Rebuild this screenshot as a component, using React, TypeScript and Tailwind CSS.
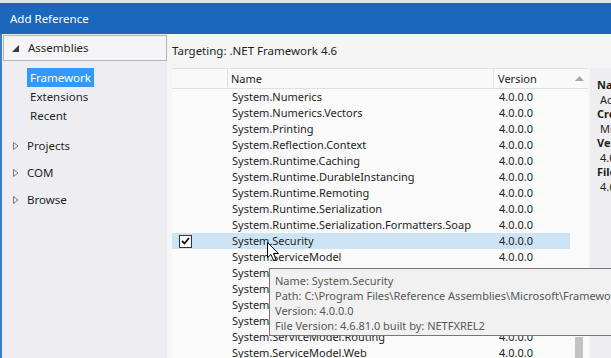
import React from 'react';

const rows: { name: string; version: string; checked?: boolean }[] = [
  { name: 'System.Numerics', version: '4.0.0.0' },
  { name: 'System.Numerics.Vectors', version: '4.0.0.0' },
  { name: 'System.Printing', version: '4.0.0.0' },
  { name: 'System.Reflection.Context', version: '4.0.0.0' },
  { name: 'System.Runtime.Caching', version: '4.0.0.0' },
  { name: 'System.Runtime.DurableInstancing', version: '4.0.0.0' },
  { name: 'System.Runtime.Remoting', version: '4.0.0.0' },
  { name: 'System.Runtime.Serialization', version: '4.0.0.0' },
  { name: 'System.Runtime.Serialization.Formatters.Soap', version: '4.0.0.0' },
  { name: 'System.Security', version: '4.0.0.0', checked: true },
  { name: 'System.ServiceModel', version: '4.0.0.0' },
  { name: 'System.ServiceModel.Activation', version: '4.0.0.0' },
  { name: 'System.ServiceModel.Activities', version: '4.0.0.0' },
  { name: 'System.ServiceModel.Channels', version: '4.0.0.0' },
  { name: 'System.ServiceModel.Discovery', version: '4.0.0.0' },
  { name: 'System.ServiceModel.Routing', version: '4.0.0.0' },
  { name: 'System.ServiceModel.Web', version: '4.0.0.0' },
];

function Collapsed() {
  return (
    <svg width="6" height="8" viewBox="0 0 6 8" className="shrink-0">
      <path d="M0.5 0.5 L5 4 L0.5 7.5 Z" fill="none" stroke="#7a7a7a" strokeWidth="1" />
    </svg>
  );
}

function Cursor() {
  return (
    <svg width="13" height="20" viewBox="0 0 13 20" className="absolute left-[267px] top-[242px]">
      <path d="M0.5 0.5 L0.5 15.5 L4 12.5 L6.5 18.5 L9 17.5 L6.5 11.5 L11.5 11.5 Z" fill="#fff" stroke="#000" strokeWidth="1" />
    </svg>
  );
}

export default function App() {
  return (
    <div className="relative w-[611px] h-[358px] overflow-hidden bg-[#f5f5f5] text-[11px] text-[#1e1e1e] font-['Noto_Sans',sans-serif] leading-[16px]">
      {/* Title bar */}
      <div className="h-[34px] bg-[#1b67bd] border-t-[3px] border-[#dde4ec] flex items-center pl-[10px] text-white text-[11.5px]">
        Add Reference
      </div>

      <div className="flex h-[324px]">
        {/* Left nav */}
        <div className="w-[167px] shrink-0 bg-[#eeeef2] border-l-2 border-[#3d7fc6] pt-[1px] text-[11.5px]">
          <div className="ml-[1px] h-[26px] bg-[#f5f5f7] border border-[#b4b4bc] flex items-center pl-[8px] gap-[9px]">
            <svg width="7" height="7" viewBox="0 0 7 7">
              <path d="M7 0 L7 7 L0 7 Z" fill="#3a3a3a" />
            </svg>
            <span>Assemblies</span>
          </div>
          <div className="pl-[25px] pt-[7px] flex flex-col items-start">
            <span className="bg-[#3399ff] text-white px-[3px] h-[19px] flex items-center">Framework</span>
            <span className="px-[3px] h-[19px] flex items-center">Extensions</span>
            <span className="px-[3px] h-[19px] flex items-center">Recent</span>
          </div>
          <div className="flex flex-col pl-[11px] pt-[7px]">
            {['Projects', 'COM', 'Browse'].map((t) => (
              <div key={t} className="h-[27px] flex items-center gap-[8px]">
                <Collapsed />
                <span>{t}</span>
              </div>
            ))}
          </div>
        </div>

        {/* Main */}
        <div className="flex-1 flex flex-col">
          <div className="h-[34px] flex items-center justify-between pl-[5px]">
            <span className="text-[11.5px]">Targeting: .NET Framework 4.6</span>
            <div className="w-[30px] h-[23px] bg-white border border-[#cfcfcf] border-r-0 flex items-center pl-[3px] text-[#7a7a7a] overflow-hidden mt-[1px]">
              Search
            </div>
          </div>

          <div className="flex flex-1 min-h-0">
            {/* List */}
            <div className="ml-[5px] w-[416px] bg-[#fafafa] flex flex-col">
              <div className="h-[21px] flex border-t border-b border-[#e0e0e0] bg-[#f9f9f9]">
                <div className="w-[56px] border-r border-[#e0e0e0]" />
                <div className="w-[266px] border-r border-[#e0e0e0] pl-[3px] flex items-center">Name</div>
                <div className="w-[76px] pl-[4px] flex items-center">Version</div>
                <div className="flex-1 flex items-center justify-center">
                  <svg width="9" height="5" viewBox="0 0 9 5">
                    <path d="M0 5 L4.5 0 L9 5 Z" fill="#a8a8a8" />
                  </svg>
                </div>
              </div>
              <div className="flex flex-1 min-h-0">
                <div className="w-[398px]">
                  {rows.map((r) => (
                    <div key={r.name} className={`h-[16px] flex items-center ${r.checked ? 'bg-[#cde4f7]' : ''}`}>
                      <div className="w-[56px] flex items-center pl-[7px]">
                        {r.checked && (
                          <div className="w-[13px] h-[13px] bg-white border border-[#333] flex items-center justify-center">
                            <svg width="9" height="8" viewBox="0 0 9 8">
                              <path d="M1 4 L3.5 6.5 L8 1" fill="none" stroke="#111" strokeWidth="1.8" />
                            </svg>
                          </div>
                        )}
                      </div>
                      <div className="w-[266px] pl-[4px] whitespace-nowrap overflow-hidden">{r.name}</div>
                      <div className="w-[76px] pl-[5px]">{r.version}</div>
                    </div>
                  ))}
                </div>
                <div className="flex-1 flex justify-center pt-[248px]">
                  <div className="w-[8px] h-full bg-[#c2c2c2]" />
                </div>
              </div>
            </div>

            {/* Details */}
            <div className="ml-[2px] flex-1 bg-[#eeeef2] pl-[7px] pt-[10px] overflow-hidden whitespace-nowrap leading-[14.5px]">
              <div className="font-bold">Name:</div>
              <div className="pl-[3px]">Accessibility</div>
              <div className="font-bold">Created By:</div>
              <div className="pl-[3px]">Microsoft Corporation</div>
              <div className="font-bold">Version:</div>
              <div className="pl-[3px]">4.0.0.0</div>
              <div className="font-bold">File Version:</div>
              <div className="pl-[3px]">4.6.81.0</div>
            </div>
          </div>
        </div>
      </div>

      {/* Tooltip */}
      <div className="absolute left-[269px] top-[268px] w-[360px] h-[68px] bg-[#f1f1f1] border border-[#767676] pl-[5px] pt-[4px] text-[#575757] whitespace-nowrap leading-[15px]">
        <div>Name: System.Security</div>
        <div>Path: C:\Program Files\Reference Assemblies\Microsoft\Framework\.NETFramework\v4.6</div>
        <div>Version: 4.0.0.0</div>
        <div>File Version: 4.6.81.0 built by: NETFXREL2</div>
      </div>

      <Cursor />
    </div>
  );
}
